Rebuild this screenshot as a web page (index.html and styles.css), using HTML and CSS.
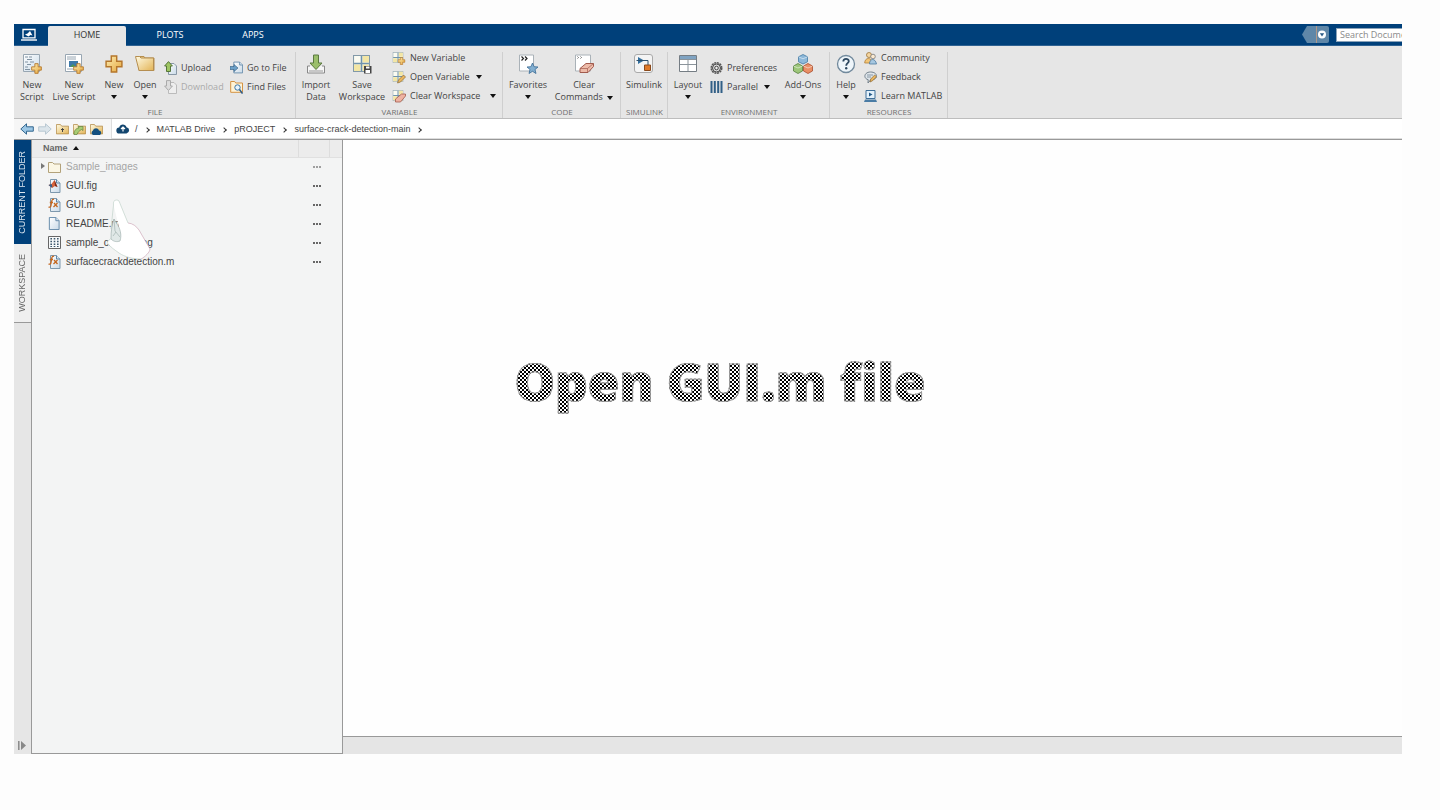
FILE: index.html
```html
<!DOCTYPE html>
<html lang="en">
<head>
<meta charset="utf-8">
<title>MATLAB</title>
<link rel="stylesheet" href="styles.css">
</head>
<body>
<svg class="defs" aria-hidden="true">
  <defs>
    <linearGradient id="gold" x1="0" y1="0" x2="1" y2="1"><stop offset="0" stop-color="#fffbe4"/><stop offset="1" stop-color="#e3b456"/></linearGradient>
    <linearGradient id="amber" x1="0" y1="0" x2="1" y2="1"><stop offset="0" stop-color="#fdeeb4"/><stop offset="1" stop-color="#e5a63c"/></linearGradient>
    <linearGradient id="paper" x1="0" y1="0" x2="1" y2="1"><stop offset="0" stop-color="#ffffff"/><stop offset="1" stop-color="#c9dae8"/></linearGradient>
    <symbol id="plus" viewBox="0 0 10 10"><path d="M3.500.6h3v2.900h2.900v3H6.500v2.900h-3V6.500H.6v-3h2.900z" fill="url(#amber)" stroke="#b5762a" stroke-width=".8"/></symbol>
    <symbol id="caret" viewBox="0 0 6 4"><path d="M0 0h6L3 4z" fill="#111"/></symbol>
    <symbol id="grid" viewBox="0 0 16 16"><path d="M.5.5h15v15H.5z" fill="#fbfbf2" stroke="#8299a8"/><path d="M9 1h6v6H9zM1 9h6v6H1zM9 9h6v6H9z" fill="#f3e6a4"/><path d="M8 1v14M1 8h14" stroke="#6f93ad" stroke-width="1.500"/></symbol>
    <symbol id="page" viewBox="0 0 12 14"><path d="M1 .5h7l3.500 3.500v9.500H1z" fill="url(#paper)" stroke="#5f86a6"/><path d="M8 .5V4h3.500" fill="#dbe8f2" stroke="#5f86a6"/></symbol>
    <symbol id="folder" viewBox="0 0 16 13"><path d="M.5 12.500V1h5l1.500 2h8.500v9.500z" fill="url(#gold)" stroke="#b58e4c"/></symbol>
    <symbol id="fx" viewBox="0 0 13 14"><path d="M2.500.5h6L12 4v9.500H2.500z" fill="url(#paper)" stroke="#7d98ad"/><path d="M8.500.5V4H12" fill="#dbe8f2" stroke="#5f86a6"/><path d="M6 1.500c-1.500-.8-2 .5-2.300 2L3 7.500C2.700 9 2 9.500.5 9M1.800 4.500H5M6 5l3.500 4M9.500 5 5.500 9" fill="none" stroke="#c4671f" stroke-width="1.300"/></symbol>
  </defs>
</svg>
<div class="app">
  <header class="tabbar">
    <button class="logo" aria-label="MATLAB Online"><svg width="18" height="14" viewBox="0 0 18 14"><path d="M3 1.500h12v8.300H3z" fill="none" stroke="#fff" stroke-width="1.300"/><path d="M1 12h16" stroke="#fff" stroke-width="1.400"/><path d="m5 6.500 2.500-1L10 3l2.500 4.500-2-.5-2 1.500z" fill="#fff"/></svg></button>
    <nav class="tabs">
      <button class="tab active">HOME</button>
      <button class="tab">PLOTS</button>
      <button class="tab">APPS</button>
    </nav>
    <div class="search">
      <button class="quick" aria-label="Quick access"><svg width="27" height="17" viewBox="0 0 27 17"><path d="M5 0h9v17H5L0 8.500z" fill="#5f87a8"/><path d="M15 0h10a2 2 0 0 1 2 2v13a2 2 0 0 1-2 2H15z" fill="#5f87a8"/><path d="M14.500 0v17" stroke="#b09888"/><circle cx="20" cy="8.500" r="4" fill="#fff"/><path d="M17.800 7.200h4.400L20 10.500z" fill="#2b5a85"/></svg></button>
      <input type="text" aria-label="Search Documentation" placeholder="Search Documentation">
    </div>
  </header>

  <div class="ribbon">
    <section class="group g-file">
      <div class="tools">
        <button class="big w36"><svg width="20" height="20" viewBox="0 0 20 20"><path d="M1.500.5h16v17h-16z" fill="url(#paper)" stroke="#98a6b2"/><path d="M3 3h3M7 3h3M5 5.500h5M3 8h3M8 8h4M5 10.500h4M3 13h3M3 15.500h5" stroke="#8092a2"/><use href="#plus" x="9" y="9" width="11" height="11"/></svg><span>New<br>Script</span></button>
        <button class="big w48"><svg width="20" height="20" viewBox="0 0 20 20"><path d="M1.500.5h16v17h-16z" fill="#fff" stroke="#98a6b2"/><path d="M3 3h9M3 5h9M3 15h6" stroke="#98a6b2"/><path d="M5 7h9v6H5z" fill="#3d79a8"/><path d="m6 13 3-3 3 3z" fill="#4d9558"/><use href="#plus" x="9" y="9" width="11" height="11"/></svg><span>New<br>Live Script</span></button>
        <button class="big w32"><svg width="20" height="20"><use href="#plus" x="1" y="1" width="18" height="18"/></svg><span>New</span><svg class="caret"><use href="#caret"/></svg></button>
        <button class="big w30"><svg width="20" height="20" viewBox="0 0 20 20"><path d="M4 16.500V2.500h5l1 1.500h9v12.500z" fill="#f5d58d" stroke="#b58e50"/><path d="m4 16.500-3.500-14h4L6 4h12.500v12.500z" fill="url(#gold)" stroke="#b58e50"/></svg><span>Open</span><svg class="caret"><use href="#caret"/></svg></button>
        <div class="stack two w66">
          <button class="row"><svg width="13" height="14" viewBox="0 0 13 14"><path d="M6 2.500h4l2.500 2.500v8.500h-8V9" fill="url(#paper)" stroke="#8898a6"/><path d="M4.500.6 8.400 5H6.500v5.500h-4V5H.6z" fill="#9ec562" stroke="#56753a"/></svg>Upload</button>
          <button class="row" disabled><svg width="13" height="14" viewBox="0 0 13 14"><path d="M6 2.500h4l2.500 2.500v8.500h-8V11" fill="#eee" stroke="#bbb"/><path d="M2.500.6h4V6h1.900l-3.900 4.500L.6 6h1.900z" fill="#ddd" stroke="#aaa"/></svg>Download</button>
        </div>
        <div class="stack two grow">
          <button class="row"><svg width="13" height="14" viewBox="0 0 13 14"><use href="#page" x="3" y="0" width="10" height="13"/><path d="M0 5.500h4V3.500L8 7 4 10.500v-2H0z" fill="#6ba0c8" stroke="#2f5b80" stroke-width=".6"/></svg>Go to File</button>
          <button class="row"><svg width="13" height="14" viewBox="0 0 13 14"><path d="M.7 12.300V1.500h4l1 1.500h6.800v9.300z" fill="#fff3d6" stroke="#d49343"/><circle cx="7.500" cy="7.500" r="2.700" fill="#e8f4fc" stroke="#3c75a5"/><path d="m9.500 9.500 3 4" stroke="#2e5c88" stroke-width="1.500"/></svg>Find Files</button>
        </div>
      </div>
      <h2>FILE</h2>
    </section>

    <section class="group g-variable">
      <div class="tools">
        <button class="big w40"><svg width="20" height="20" viewBox="0 0 20 20"><path d="M4 12H1.500v7h17v-7H16" fill="#f6f6f6" stroke="#888"/><path d="M3 17h14" stroke="#999"/><path d="M7.500 1h5v8h3.500L10 15.500 4 9h3.500z" fill="#9bbf6b" stroke="#5b7a40"/></svg><span>Import<br>Data</span></button>
        <button class="big w52"><svg width="20" height="20" viewBox="0 0 20 20"><use href="#grid" x="1" y="1" width="17" height="17"/><path d="M12 12h7.500v7.500H12z" fill="#444"/><path d="M14 12.500h3.500v2H14zM13.500 16h4.500v3h-4.500z" fill="#fff"/></svg><span>Save<br>Workspace</span></button>
        <div class="stack grow">
          <button class="row"><svg width="14" height="14" viewBox="0 0 13 14"><use href="#grid" y="1" width="11" height="11"/><use href="#plus" x="5" y="6" width="8" height="8"/></svg>New Variable</button>
          <button class="row"><svg width="14" height="14" viewBox="0 0 13 14"><use href="#grid" y="1" width="11" height="11"/><path d="m5 13 1-3 5-5 2 2-5 5z" fill="#eab65f" stroke="#8b6834" stroke-width=".7"/></svg>Open Variable<svg class="caret"><use href="#caret"/></svg></button>
          <button class="row wide"><svg width="14" height="14" viewBox="0 0 13 14"><use href="#grid" y="1" width="11" height="11"/><path d="m3 10 6-5h4v2l-5 6H3z" fill="#eeb3a2" stroke="#a25b4e" stroke-width=".8"/></svg>Clear Workspace<svg class="caret"><use href="#caret"/></svg></button>
        </div>
      </div>
      <h2>VARIABLE</h2>
    </section>

    <section class="group g-code">
      <div class="tools">
        <button class="big w50"><svg width="20" height="20" viewBox="0 0 20 20"><path d="M1.500 1h14v16h-14z" fill="#fff" stroke="#aab2b8"/><path d="m3.500 2.500 2 2-2 2m3.500-4 2 2-2 2" fill="none" stroke="#222" stroke-width="1.200"/><path d="m14.500 9 1.600 3.700 3.900.3-3 2.500 1 4-3.500-2.200L11 19.500l1-4L9 13l3.900-.3z" fill="#83afd0" stroke="#386a94" stroke-width=".8"/></svg><span>Favorites</span><svg class="caret"><use href="#caret"/></svg></button>
        <button class="big w62"><svg width="20" height="20" viewBox="0 0 20 20"><path d="M1.500 1h15v16h-15z" fill="#fff" stroke="#aab2b8"/><path d="m3.500 2.500 1 1-1 1m3-2 1 1-1 1" fill="none" stroke="#666"/><path d="m6 14.500 6-5h7.500v3L14 18.500H6z" fill="#edbba9" stroke="#a25b4e"/><path d="M6 14.500h7.500v4m0-4 6-5" fill="none" stroke="#a25b4e" stroke-width=".7"/></svg><span>Clear<br>Commands <svg class="caret"><use href="#caret"/></svg></span></button>
      </div>
      <h2>CODE</h2>
    </section>

    <section class="group g-simulink">
      <div class="tools">
        <button class="big w46"><svg width="20" height="20" viewBox="0 0 20 20"><rect x=".5" y=".5" width="18" height="18" rx="2.500" fill="#f4f4f4" stroke="#a9a9a9"/><path d="M4 3v7l6-3.500z" fill="#326f9e"/><path d="M2.500 6.500H14V11" fill="none" stroke="#2d506d"/><path d="M10.500 11h6v5.500h-6z" fill="#df7928" stroke="#8a4a1c"/></svg><span>Simulink</span></button>
      </div>
      <h2>SIMULINK</h2>
    </section>

    <section class="group g-environment">
      <div class="tools">
        <button class="big w40"><svg width="20" height="20" viewBox="0 0 20 20"><path d="M1.500 1.500h17v16h-17z" fill="#fff" stroke="#757d84"/><path d="M2 2h16v3H2z" fill="#7fa3c2"/><path d="M10 5v12M2 10.500h16M2 5.500h16" stroke="#8b949b"/></svg><span>Layout</span><svg class="caret"><use href="#caret"/></svg></button>
        <div class="stack two w75">
          <button class="row"><svg width="13" height="14" viewBox="0 0 13 14"><circle cx="6.500" cy="7" r="5.200" fill="none" stroke="#555" stroke-width="1.600" stroke-dasharray="2 .7"/><circle cx="6.500" cy="7" r="4" fill="#ddd" stroke="#444"/><circle cx="6.500" cy="7" r="1.800" fill="#eee" stroke="#444"/></svg>Preferences</button>
          <button class="row"><svg width="13" height="14" viewBox="0 0 13 14"><path d="M1.500 1v12M4.800 1v12M8.200 1v12M11.500 1v12" stroke="#315f86" stroke-width="2"/></svg>Parallel<svg class="caret"><use href="#caret"/></svg></button>
        </div>
        <button class="big w40"><svg width="20" height="20" viewBox="0 0 20 20"><g stroke-width=".8"><path d="m10 .5 4.500 2.300v5L10 10 5.500 7.800v-5z" fill="#8eb9da" stroke="#447aa3"/><path d="M5 9.500 9.500 12v5L5 19.500.5 17v-5z" fill="#9dc67a" stroke="#547f3c"/><path d="m15 9.500 4.500 2.500v5L15 19.500 10.500 17v-5z" fill="#e98f66" stroke="#a94e2d"/></g><path d="m5.500 2.800 4.500 2 4.500-2M.5 12 5 14l4.500-2m1 0 4.500 2 4.500-2" fill="none" stroke="#fff" stroke-opacity=".5"/></svg><span>Add-Ons</span><svg class="caret"><use href="#caret"/></svg></button>
      </div>
      <h2>ENVIRONMENT</h2>
    </section>

    <section class="group g-resources">
      <div class="tools">
        <button class="big w32"><svg width="20" height="20" viewBox="0 0 20 20"><circle cx="10" cy="10" r="8.500" fill="#eef5fa" stroke="#71899c" stroke-width="1.300"/><path d="M7.300 7.500c0-3.500 5.500-3.300 5.500-.3 0 2-2.600 2-2.600 4.500" fill="none" stroke="#2d4860" stroke-width="1.800"/><circle cx="10.200" cy="14.300" r="1.200" fill="#2d4860"/></svg><span>Help</span><svg class="caret"><use href="#caret"/></svg></button>
        <div class="stack tight grow">
          <button class="row"><svg width="13" height="14" viewBox="0 0 13 14"><g stroke-width=".8"><circle cx="5" cy="4" r="2.500" fill="#f5d5a0" stroke="#9a7439"/><path d="M.7 12c0-6 7-6 8 0z" fill="#f2c577" stroke="#b1803a"/><circle cx="9" cy="5.500" r="2.300" fill="#fbe9cf" stroke="#7a7a7a"/><path d="M5.500 13c0-6 6-6 7 0z" fill="#a6c7e0" stroke="#4c7ba1"/></g></svg>Community</button>
          <button class="row"><svg width="13" height="14" viewBox="0 0 13 14"><path d="M6.500 2c8 0 8 8 0 8L4 13l.2-3.300C-1 8.500 0 2 6.500 2z" fill="#dfe5ea" stroke="#74818c"/><path d="M3 5h6M3 7h4" stroke="#8898a6"/><path d="m6 12 .7-3 4-4 1.800 1.800-4 4z" fill="#eab65f" stroke="#8b6834" stroke-width=".7"/></svg>Feedback</button>
          <button class="row"><svg width="13" height="14" viewBox="0 0 13 14"><path d="M2 1.500h9v8H2z" fill="#e4f1fb" stroke="#3f6f98"/><path d="M5 3.500v4L8.500 5.500z" fill="#255b89"/><path d="M1 10.500h11l1 2.500H0z" fill="#4a7ca5"/></svg>Learn MATLAB</button>
        </div>
      </div>
      <h2>RESOURCES</h2>
    </section>
  </div>

  <nav class="address" aria-label="Current folder path">
    <div class="navicons">
      <button aria-label="Back"><svg width="14" height="12" viewBox="0 0 14 12"><path d="M6.500.8v3h6.800v4.400H6.500v3L.8 6z" fill="#9cc7e5" stroke="#34678f"/></svg></button>
      <button aria-label="Forward" disabled><svg width="14" height="12" viewBox="0 0 14 12"><path d="M7.500.8v3H.7v4.400h6.800v3L13.200 6z" fill="#dce5eb" stroke="#b9c8d2"/></svg></button>
      <button aria-label="Up one level"><svg width="13" height="12"><use href="#folder" width="13" height="12"/><path d="M6.500 9V5.500M5 7l1.500-1.500L8 7" fill="none" stroke="#444"/></svg></button>
      <button aria-label="Browse folder"><svg width="13" height="12"><use href="#folder" width="13" height="12"/><path d="M1 11.500c0-5 3-6.500 5-6.500L5 3.500h5v4L8.500 6.500C6 8 5 9 4 11.500z" fill="#a8cc72" stroke="#63833e" stroke-width=".7"/></svg></button>
      <button aria-label="MATLAB Drive"><svg width="13" height="12"><use href="#folder" width="13" height="12"/><path d="M3 12a2.500 2.500 0 0 1 0-4.500c1-3 5-3 6 0a2.400 2.400 0 0 1 1 4.500z" fill="#14507f"/></svg></button>
    </div>
    <div class="crumbs">
      <svg width="14" height="10" viewBox="0 0 14 10"><path d="M3.500 9.500a3 3 0 0 1-.3-6C4-.5 9.500-.5 10.500 3.200a3.200 3.200 0 0 1 0 6.300z" fill="#13466f"/><path d="M7 3v4.500M5 5l2-2 2 2" fill="none" stroke="#fff" stroke-width="1.200"/></svg>
      <a href="#" class="slash">/</a><i></i><a href="#">MATLAB Drive</a><i></i><a href="#">pROJECT</a><i></i><a href="#">surface-crack-detection-main</a><i></i>
    </div>
  </nav>

  <main class="work">
    <aside class="rail">
      <button class="side active"><span>CURRENT FOLDER</span></button>
      <button class="side second"><span>WORKSPACE</span></button>
      <button class="expand" aria-label="Expand panel"><svg width="8" height="9" viewBox="0 0 8 9"><path d="M.8 0v9" stroke="#888" stroke-width="1.500"/><path d="M3 0v9l5-4.500z" fill="#888"/></svg></button>
    </aside>
    <div class="panel">
      <table class="files">
        <thead><tr><th class="name">Name <svg width="6" height="4"><path d="M0 4h6L3 0z" fill="#111"/></svg></th><th class="col"></th><th class="end"></th></tr></thead>
        <tbody>
          <tr class="dim"><td><div class="file"><svg class="twist" width="4" height="6"><path d="M0 0v6l4-3z" fill="#777"/></svg><svg width="13" height="14" viewBox="0 0 13 14"><path d="M.5 12.500V2.500h4L6 4h6.500v8.500z" fill="#fbf6e4" stroke="#b3a27a"/></svg>Sample_images</div></td><td colspan="2"><button class="more" aria-label="More"></button></td></tr>
          <tr><td><div class="file"><svg width="13" height="14" viewBox="0 0 13 14"><path d="M2.500.5h6L12 4v9.500H2.500z" fill="url(#paper)" stroke="#7d98ad"/><path d="M8.500.5V4H12" fill="#dbe8f2" stroke="#5f86a6"/><path d="m.5 6 3-1L6.500 1l3 7-2.500-1L4 9z" fill="#d9643a"/><path d="m.5 6 3-1 1 3.500L3 8z" fill="#315f8c"/><path d="m6.500 1 3 7-2.500-1z" fill="#7a2a1b"/></svg>GUI.fig</div></td><td colspan="2"><button class="more" aria-label="More"></button></td></tr>
          <tr><td><div class="file"><svg width="13" height="14"><use href="#fx" width="13" height="14"/></svg>GUI.m</div></td><td colspan="2"><button class="more" aria-label="More"></button></td></tr>
          <tr><td><div class="file"><svg width="13" height="14"><use href="#page" width="12" height="13"/></svg>README.md</div></td><td colspan="2"><button class="more" aria-label="More"></button></td></tr>
          <tr><td><div class="file"><svg width="13" height="14" viewBox="0 0 13 14"><path d="M.5.5h12v12H.5z" fill="#f7f9fa" stroke="#666"/><path d="M3.200 2v9M6.500 2v9M9.800 2v9" stroke="#3c566b" stroke-width="1.600" stroke-dasharray="1.500 1.200"/></svg>sample_crack1.png</div></td><td colspan="2"><button class="more" aria-label="More"></button></td></tr>
          <tr><td><div class="file"><svg width="13" height="14"><use href="#fx" width="13" height="14"/></svg>surfacecrackdetection.m</div></td><td colspan="2"><button class="more" aria-label="More"></button></td></tr>
        </tbody>
      </table>
      <svg class="pointer" width="46" height="64" viewBox="0 0 46 64"><path d="M10.500 1c1.500 0 2.500 1 3.500 3.500L22 24c5 .5 8 3 11 7l11 19c0 3-5 8-9 10-8 0-16-2-22-6-4-3-9-6-11.500-10 0-2 2-4 4.500-4.500L10 39l3-11L7.500 6c-.5-3 .5-5 3-5z" fill="#fff"/><path d="M6 39.500c-2.500.5-4.500 2.500-4.500 4.500C4 48 9 51 13 54c6 4 14 6 22 6M5 30 7.500 6c-.5-3 .5-5 3-5s2.500 1 3.500 3.500L22 24" fill="none" stroke="#c2d2ca" stroke-width=".7"/><path d="M22 24c5 .5 8 3 11 7l11 19c0 3-5 8-9 10" fill="none" stroke="#cfa9b9" stroke-width=".7"/><path d="M8 20c-2 5-3 12-3 20 3 3 6 3 9 2 2-6 0-13-3-17z" fill="#e0e8e7" stroke="#a3b3b0" stroke-width=".7"/><path d="M8 20 9 32l5 6M7 37l3-4" fill="none" stroke="#a3b3b0" stroke-width=".7"/></svg>
    </div>
    <div class="editor"><div class="canvas"></div><footer></footer></div>
  </main>
</div>
<h1 class="caption">Open GUI.m file</h1>
</body>
</html>
```
FILE: styles.css
```css
* { box-sizing: border-box; }
body {
  margin: 0;
  min-height: 100vh;
  padding: 24px 38px 56px 14px;
  display: flex;
  background: #fdfdfd;
  color: #444;
  font: 9px/12px "Open Sans", "Noto Sans", sans-serif;
  position: relative;
}
button { margin: 0; padding: 0; border: 0; background: none; color: inherit; font: inherit; }
svg { flex: none; }
a { color: inherit; text-decoration: none; }
.defs { position: absolute; width: 0; height: 0; }
.app { flex: 1; min-width: 0; display: flex; flex-direction: column; overflow: hidden; }

.tabbar { height: 22px; flex: none; display: flex; background: #00407a; border-bottom: 1px solid #2f6292; color: #fff; }
.logo { width: 34px; padding: 1px 0 0 6px; display: flex; align-items: center; }
.tabs { display: flex; padding-top: 2px; }
.tab { width: 78px; padding-bottom: 2px; }
.tab:nth-child(2) { width: 88px; }
.tab.active { background: #e6e6e6; color: #333; border-radius: 2px 2px 0 0; margin-bottom: -1px; padding-bottom: 3px; }
.search { margin-left: auto; width: 100px; display: flex; align-items: center; gap: 7px; overflow: hidden; }
.quick { display: flex; }
.search input {
  flex: none; width: 120px; height: 14px; padding: 0 3px;
  border: 1px solid #8aa2b8; background: #fff; font: inherit;
}
.search input::placeholder { color: #8a8a8a; opacity: 1; }

.ribbon { height: 73px; flex: none; display: flex; background: #e6e6e6; border-bottom: 1px solid #bdbdbd; }
.group { display: flex; flex-direction: column; justify-content: space-between; position: relative; }
.group::after { content: ""; position: absolute; right: 0; top: 6px; bottom: 0; border-right: 1px solid #cfcfcf; }
.g-file { width: 282px; }
.g-variable { width: 207px; }
.g-code { width: 118px; }
.g-simulink { width: 47px; }
.g-environment { width: 162px; }
.g-resources { width: 118px; }
.group h2 { margin: 0; font-size: 8px; line-height: 13px; font-weight: 400; text-align: center; color: #707070; }
.tools { display: flex; height: 59px; }
.big { flex: none; padding-top: 8px; display: flex; flex-direction: column; align-items: center; text-align: center; white-space: nowrap; }
.big > span { margin-top: 5px; }
.caret { width: 6px; height: 4px; }
.big > .caret { margin-top: 4px; }
.big span .caret { margin-left: 2px; vertical-align: middle; }
.w30 { width: 30px; } .w32 { width: 32px; } .w36 { width: 36px; } .w40 { width: 40px; } .w46 { width: 46px; }
.w48 { width: 48px; } .w50 { width: 50px; } .w52 { width: 52px; } .w62 { width: 62px; }
.w66 { width: 66px; } .w75 { width: 75px; }
.grow { flex: 1; }
.stack { padding: 3px 0 0 4px; display: flex; flex-direction: column; }
.stack.two { padding-top: 12px; }
.stack.w75, .stack.tight { padding-left: 2px; }
.row { height: 19px; display: flex; align-items: center; gap: 4px; white-space: nowrap; }
.row .caret { margin-left: 2px; }
.row.wide .caret { margin-left: 6px; }
.row:disabled { color: #aaa; }

.address { height: 20px; flex: none; display: flex; align-items: center; background: #f6f6f6; font: 9px/12px "Liberation Sans", Arial, sans-serif; }
.navicons { display: flex; align-items: center; gap: 4px; padding: 0 8px 0 6px; }
.navicons button { display: flex; }
.crumbs { flex: 1; align-self: stretch; display: flex; align-items: center; background: #fff; border: 1px solid #ddd; border-width: 0 0 1px 1px; padding-left: 4px; }
.crumbs i { width: 4px; height: 4px; margin: 2px 8px 0 7px; border: solid #333; border-width: 1px 1px 0 0; transform: rotate(45deg); }
.crumbs .slash { margin-left: 5px; }

.work { flex: 1; display: flex; min-height: 0; border-top: 1px solid #999; }
.rail { width: 18px; flex: none; display: flex; flex-direction: column; background: #e6e6e6; border-right: 1px solid #999; font: 9px/12px "Liberation Sans", Arial, sans-serif; }
.side { height: 104px; padding-right: 2px; display: flex; align-items: center; justify-content: center; color: #666; }
.side span { writing-mode: vertical-rl; transform: rotate(180deg); }
.side.active { background: #00407a; color: #dce6ef; }
.side.second { height: 79px; border-bottom: 1px solid #999; background: #efefef; }
.expand { margin-top: auto; padding: 0 0 4px 4px; display: flex; }
.panel { width: 311px; flex: none; position: relative; background: #f3f4f4; border: 1px solid #999; border-width: 0 1px 1px 0; }
.files { width: 100%; border-collapse: collapse; table-layout: fixed; font: 10px/12px "Liberation Sans", Arial, sans-serif; }
.files th { height: 17px; padding: 0; background: #ececec; border-bottom: 1px solid #e0e0e0; text-align: left; font-size: 9px; color: #666; }
.files .name { padding-left: 11px; }
.files .name svg { margin: 0 0 1px 3px; }
.files .col { width: 31px; border-left: 1px solid #ddd; }
.files .end { width: 13px; border-left: 1px solid #ddd; }
.files td { height: 19px; padding: 0; }
.file { display: flex; align-items: center; gap: 5px; padding-left: 16px; position: relative; }
.twist { position: absolute; left: 9px; top: 3px; }
.dim { color: #a5a5a5; }
.more { display: block; width: 8px; height: 2px; margin-left: 15px; background: repeating-linear-gradient(90deg, #666 0 2px, transparent 2px 3px); }
.dim .more { opacity: .6; }
.pointer { position: absolute; left: 74px; top: 59px; }
.editor { flex: 1; display: flex; flex-direction: column; }
.canvas { flex: 1; background: #fefefe; }
.editor footer { height: 18px; background: #e5e5e5; border-top: 1px solid #999; }

.caption {
  position: absolute; left: 0; right: 0; top: 345px; margin: 0;
  text-align: center; font-size: 51px; line-height: 72px; font-weight: 800;
  color: transparent; -webkit-text-stroke: 1px #999;
  background: repeating-conic-gradient(#000 0 25%, #fff 0 50%) 0 0 / 4px 4px;
  -webkit-background-clip: text; background-clip: text;
  pointer-events: none;
}
```
